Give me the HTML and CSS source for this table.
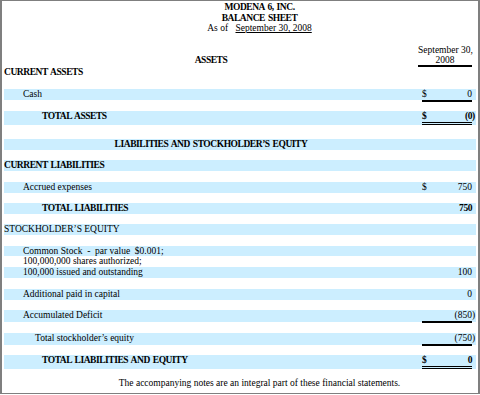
FILE: index.html
```html
<!DOCTYPE html>
<html>
<head>
<meta charset="utf-8">
<link rel="stylesheet" href="styles.css">
</head>
<body>
<div class="frame">
  <div class="title">
    <div class="b">MODENA 6, INC.</div>
    <div class="b">BALANCE SHEET</div>
    <div>As of <span class="date">September 30, 2008</span></div>
  </div>
  <div class="sheet">
    <div class="row head">
      <div class="label center b hlabel">ASSETS</div>
      <div class="colhead">September 30,<br>2008</div>
      <div class="par"></div>
    </div>
    <div class="row"><div class="label b">CURRENT ASSETS</div></div>
    <div class="gap g11"></div>
    <div class="row band"><div class="label i1">Cash</div><div class="amt ul"><span>$</span><span>0</span></div><div class="par"></div></div>
    <div class="gap g11"></div>
    <div class="row band h14"><div class="label b i3">TOTAL ASSETS</div><div class="amt dbl b"><span>$</span><span>(0</span></div><div class="par b">)</div></div>
    <div class="gap g14"></div>
    <div class="row band"><div class="label b center">LIABILITIES AND STOCKHOLDER’S EQUITY</div></div>
    <div class="gap g10"></div>
    <div class="row band"><div class="label b">CURRENT LIABILITIES</div></div>
    <div class="gap g11"></div>
    <div class="row band"><div class="label i1">Accrued expenses</div><div class="amt"><span>$</span><span>750</span></div><div class="par"></div></div>
    <div class="gap g10"></div>
    <div class="row band"><div class="label b i3">TOTAL LIABILITIES</div><div class="amt b"><span></span><span>750</span></div><div class="par"></div></div>
    <div class="gap g10"></div>
    <div class="row band"><div class="label">STOCKHOLDER’S EQUITY</div></div>
    <div class="gap g11"></div>
    <div class="row band h10"><div class="label i1">Common Stock &nbsp;- &nbsp;par value &nbsp;$0.001;</div></div>
    <div class="row"><div class="label i1">100,000,000 shares authorized;</div></div>
    <div class="row band"><div class="label i1">100,000 issued and outstanding</div><div class="amt"><span></span><span>100</span></div><div class="par"></div></div>
    <div class="gap g11"></div>
    <div class="row band"><div class="label i1">Additional paid in capital</div><div class="amt"><span></span><span>0</span></div><div class="par"></div></div>
    <div class="gap g10"></div>
    <div class="row band h12"><div class="label i1">Accumulated Deficit</div><div class="amt ul"><span></span><span>(850</span></div><div class="par">)</div></div>
    <div class="gap g11"></div>
    <div class="row band h12"><div class="label i2">Total stockholder’s equity</div><div class="amt ul"><span></span><span>(750</span></div><div class="par">)</div></div>
    <div class="gap g10"></div>
    <div class="row band h14"><div class="label b i3">TOTAL LIABILITIES AND EQUITY</div><div class="amt dbl b"><span>$</span><span>0</span></div><div class="par"></div></div>
  </div>
  <p class="foot">The accompanying notes are an integral part of these financial statements.</p>
</div>
</body>
</html>
```

FILE: styles.css
```css
html, body {
  margin: 0;
  padding: 0;
  background: #ffffff;
}
body {
  font-family: "Liberation Serif", "Times New Roman", serif;
  font-size: 9.5px;
  color: #000000;
}
.frame {
  box-sizing: border-box;
  width: 480px;
  height: 394px;
  border: 1px solid #7f7f7f;
  border-left-width: 2px;
  border-right-width: 2px;
  padding: 1px 2px 0 2px;
}
.b {
  font-weight: bold;
  letter-spacing: -0.45px;
  word-spacing: 1px;
}
.title {
  padding-left: 39px;
  text-align: center;
  line-height: 10.5px;
}
.date {
  margin-left: 5px;
  text-decoration: underline;
}
.sheet {
  margin-top: 11.5px;
}
.row {
  display: grid;
  grid-template-columns: 418px 50px 4px;
  height: 11px;
  line-height: 11px;
  white-space: nowrap;
}
.band {
  background: #cceeff;
}
.h10 { height: 10px; }
.h12 { height: 12px; }
.h14 { height: 14px; }
.gap { height: 11px; }
.g10 { height: 10px; }
.g11 { height: 11px; }
.g14 { height: 14px; }
.label {
  grid-column: 1;
}
.center {
  text-align: center;
  padding-right: 4px;
}
.i1 { padding-left: 19px; }
.i2 { padding-left: 31px; }
.i3 { padding-left: 38px; }
.head {
  height: 22px;
  line-height: 10px;
}
.hlabel {
  align-self: end;
  padding-bottom: 2px;
}
.colhead {
  margin-left: -4px;
  text-align: center;
  border-bottom: 2px solid #000;
  line-height: 10px;
}
.amt {
  grid-column: 2;
  display: flex;
  justify-content: space-between;
  box-sizing: border-box;
}
.ul {
  border-bottom: 2px solid #000;
}
.dbl {
  border-bottom: 3px double #000;
}
.par {
  grid-column: 3;
}
.foot {
  margin: 9px 0 0 0;
  padding-left: 39px;
  text-align: center;
  line-height: 11px;
}
```
